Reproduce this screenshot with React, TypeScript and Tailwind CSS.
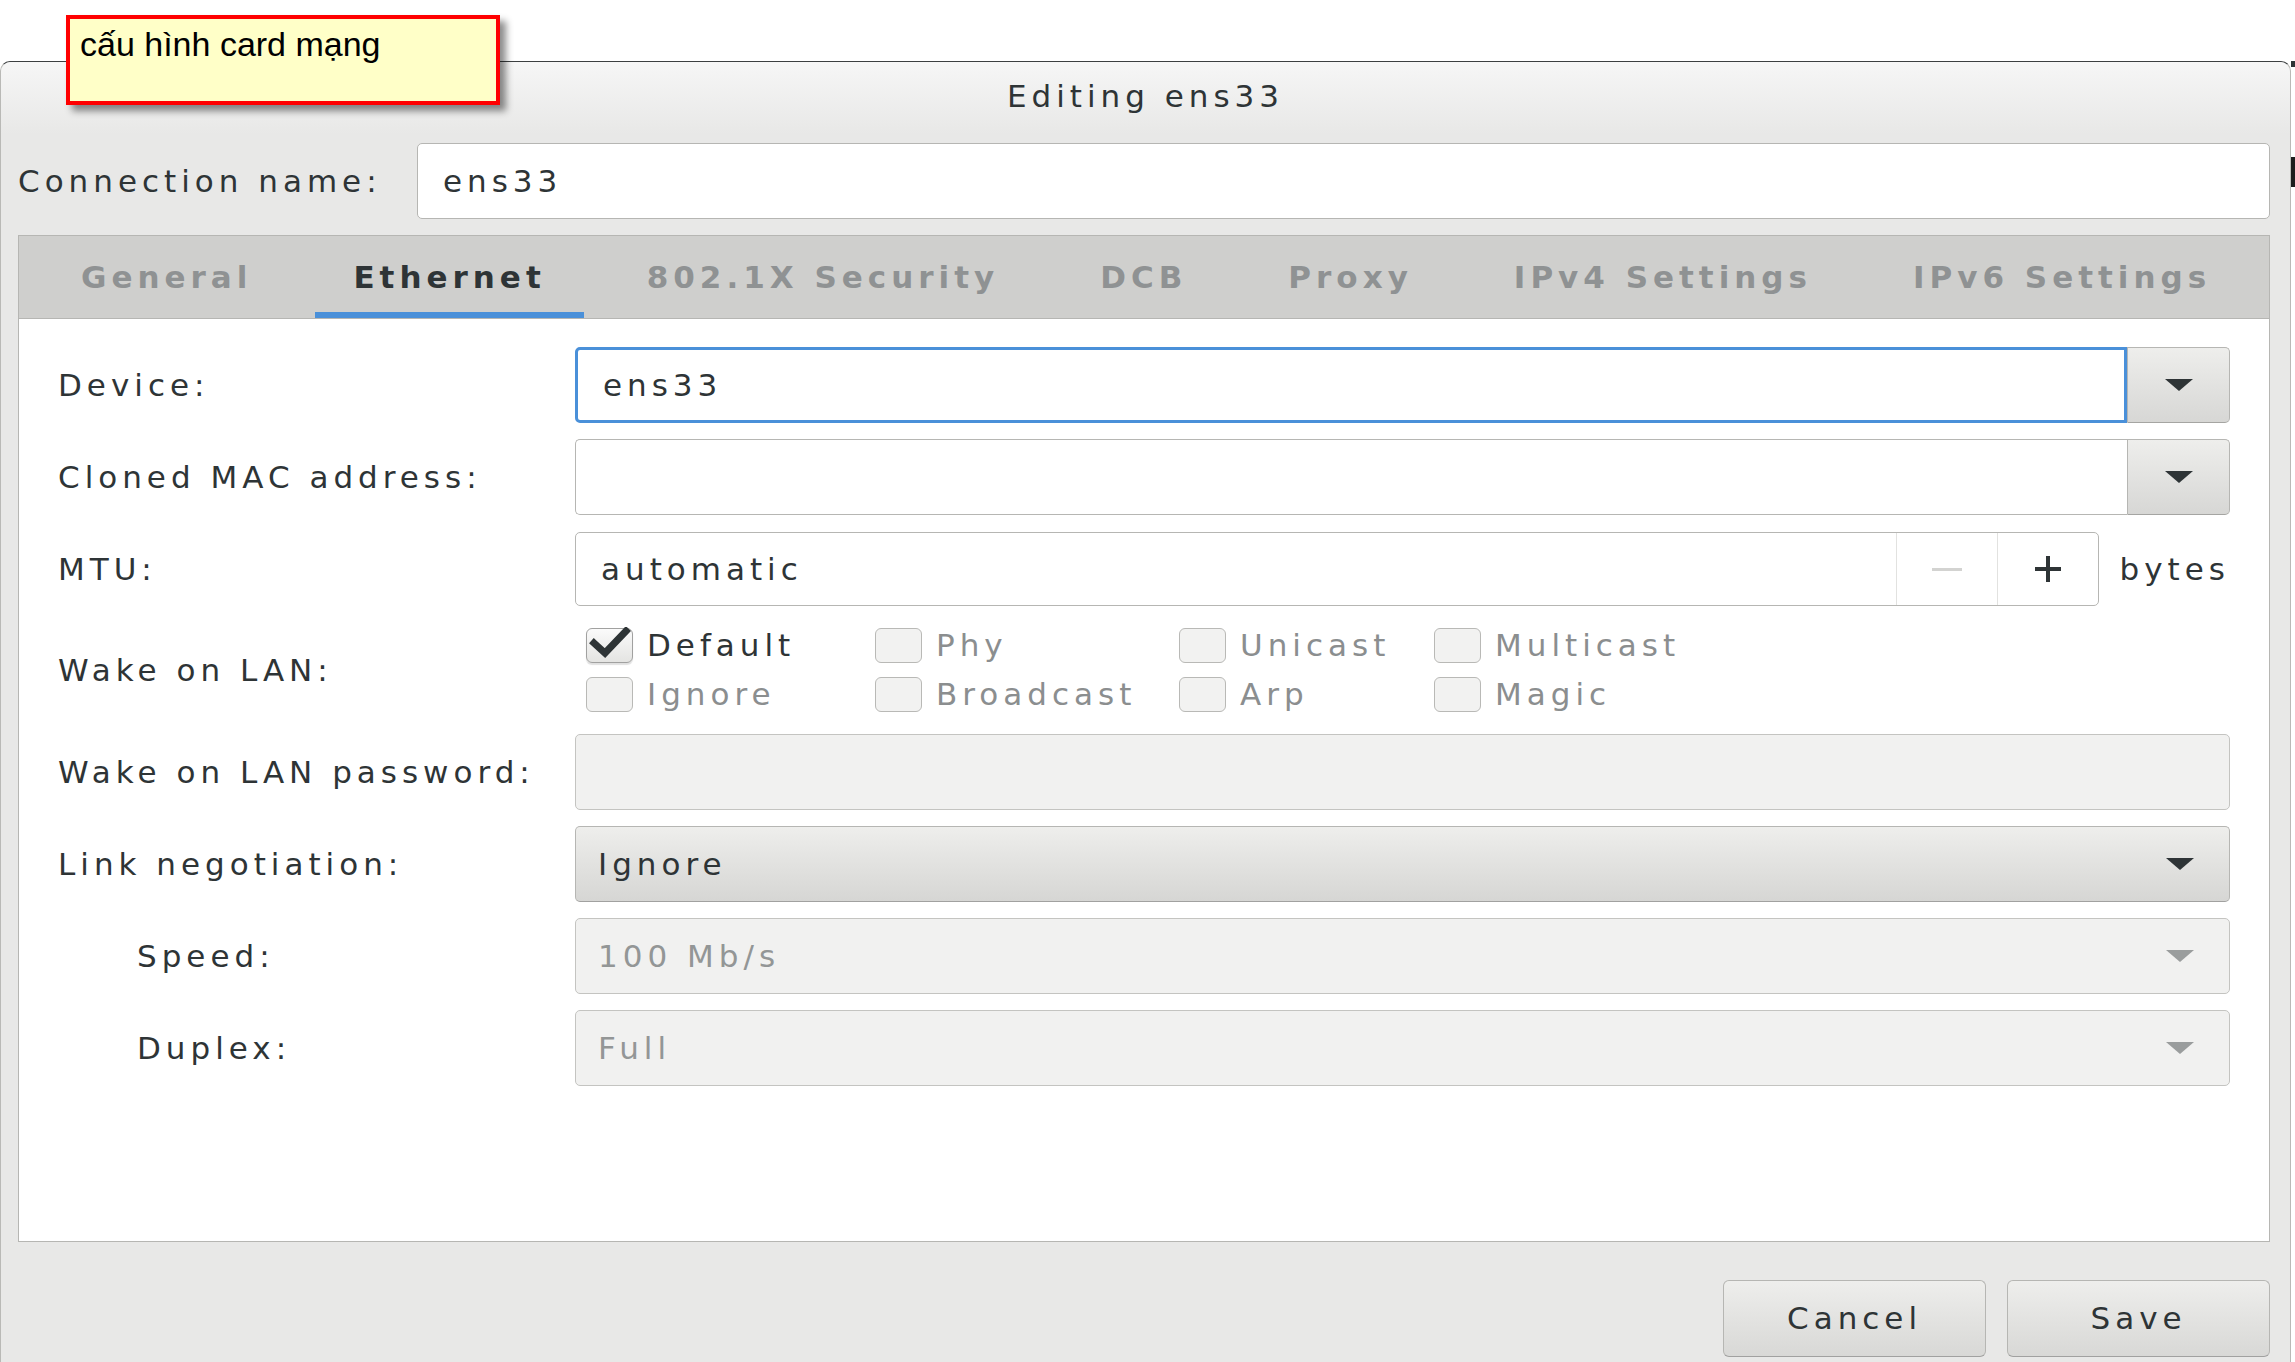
import type { ReactNode } from 'react';

const txt = "text-[31px] tracking-[5px] leading-none";
const dark = "text-[#2e3436]";
const dim = "text-[#8b8e8f]";

function Arrow({ color = '#2e3436' }: { color?: string }) {
  return (
    <svg width="28" height="12" viewBox="0 0 28 12">
      <polygon points="0,0 28,0 14,12" fill={color} />
    </svg>
  );
}

function Label({ children, indent }: { children: ReactNode; indent?: boolean }) {
  return (
    <div className={`flex items-center ${txt} ${dark} ${indent ? 'pl-[79px]' : ''}`}>{children}</div>
  );
}

function ComboEntry({ value, focused }: { value?: string; focused?: boolean }) {
  return (
    <div className="flex h-[76px]">
      <div
        className={`flex-1 flex items-center pl-[25px] bg-white rounded-l-[5px] ${
          focused ? 'border-[3px] border-[#4a90d9]' : 'border border-r-0 border-[#b6b6b3]'
        } ${txt} ${dark}`}
      >
        {value}
      </div>
      <div className="w-[103px] flex items-center justify-center rounded-r-[5px] border border-[#b6b6b3] border-b-[#a5a5a2] bg-gradient-to-b from-[#eeeeec] to-[#d7d7d5]">
        <Arrow />
      </div>
    </div>
  );
}

function Combo({ value, disabled }: { value: string; disabled?: boolean }) {
  return (
    <div
      className={`h-[76px] flex items-center justify-between pl-[22px] pr-[35px] rounded-[5px] border ${
        disabled
          ? 'bg-[#f1f1f0] border-[#c4c4c1]'
          : 'bg-gradient-to-b from-[#eeeeec] to-[#d6d6d4] border-[#b6b6b3] border-b-[#a1a1a0]'
      }`}
    >
      <span className={`${txt} ${disabled ? 'text-[#939696]' : dark}`}>{value}</span>
      <Arrow color={disabled ? '#9a9d9d' : '#2e3436'} />
    </div>
  );
}

function Check({ label, checked }: { label: string; checked?: boolean }) {
  return (
    <div className="flex items-center gap-[14px]">
      <div
        className={`w-[47px] h-[35px] rounded-[6px] border flex items-center justify-center ${
          checked
            ? 'border-[#a1a1a0] bg-gradient-to-b from-[#fbfbfb] to-[#e4e4e2] shadow-[0_2px_1px_rgba(0,0,0,0.12)]'
            : 'border-[#b9b9b6] bg-[#f2f2f1]'
        }`}
      >
        {checked && (
          <svg width="42" height="32" viewBox="0 0 42 32" className="-mt-[5px]">
            <path d="M5 16 L16 26 L37 4" fill="none" stroke="#2e3436" strokeWidth="7" strokeLinecap="square" />
          </svg>
        )}
      </div>
      <span className={`${txt} ${checked ? dark : dim}`}>{label}</span>
    </div>
  );
}

const tabs = ['General', 'Ethernet', '802.1X Security', 'DCB', 'Proxy', 'IPv4 Settings', 'IPv6 Settings'];

export default function App() {
  return (
    <div className="relative w-[2295px] h-[1362px] overflow-hidden bg-white font-['DejaVu_Sans',sans-serif]">
      <div className="flex pt-[61px] h-full">
        <div className="w-[2291px] h-full flex flex-col bg-[#e8e8e7] rounded-t-[10px] border-t border-x border-t-[#3c3f40] border-x-[#b9b9b6]">
          {/* header bar */}
          <div className="h-[72px] shrink-0 flex items-center justify-center rounded-t-[10px] bg-gradient-to-b from-[#f6f6f6] to-[#e8e8e7]">
            <span className={`${txt} ${dark} -mt-[3px]`}>Editing ens33</span>
          </div>

          {/* connection name */}
          <div className="flex items-center mt-[9px] pl-[17px] pr-[20px]">
            <span className={`w-[399px] ${txt} ${dark}`}>Connection name:</span>
            <div className={`flex-1 h-[76px] flex items-center pl-[25px] bg-white rounded-[5px] border border-[#b6b6b3] ${txt} ${dark}`}>
              ens33
            </div>
          </div>

          {/* notebook */}
          <div className="mt-[16px] ml-[17px] mr-[20px] border border-[#b6b6b3] flex flex-col">
            <div className="h-[83px] flex items-stretch pl-[24px] gap-[25px] bg-[#cfcfcd] border-b border-[#b6b6b3]">
              {tabs.map((t) => (
                <div
                  key={t}
                  className={`px-[38px] flex items-center font-bold ${txt} ${
                    t === 'Ethernet' ? 'text-[#2e3436] border-b-[6px] border-[#4a90d9] pt-[6px]' : 'text-[#8f9293]'
                  }`}
                >
                  {t}
                </div>
              ))}
            </div>

            <div className="h-[922px] bg-white px-[39px] pt-[28px] grid grid-cols-[517px_1fr] auto-rows-min gap-y-[16px]">
              <Label>Device:</Label>
              <ComboEntry value="ens33" focused />

              <Label>Cloned MAC address:</Label>
              <ComboEntry />

              <Label>MTU:</Label>
              <div className="flex items-center h-[76px]">
                <div className="flex-1 h-[74px] flex rounded-[5px] border border-[#b6b6b3] bg-white">
                  <div className={`flex-1 flex items-center pl-[25px] ${txt} ${dark}`}>automatic</div>
                  <div className="w-[101px] border-l border-[#e2e2e0] flex items-center justify-center">
                    <div className="w-[30px] h-[3px] bg-[#d3d3d1]" />
                  </div>
                  <div className="w-[101px] border-l border-[#e2e2e0] flex items-center justify-center">
                    <svg width="30" height="30" viewBox="0 0 30 30">
                      <path d="M15 2 V28 M2 15 H28" stroke="#2e3436" strokeWidth="4" />
                    </svg>
                  </div>
                </div>
                <span className={`ml-[21px] ${txt} ${dark}`}>bytes</span>
              </div>

              <Label>Wake on LAN:</Label>
              <div className="h-[95px] pt-[5px] pl-[11px] grid grid-cols-[289px_304px_255px_auto] gap-y-[14px] content-start">
                <Check label="Default" checked />
                <Check label="Phy" />
                <Check label="Unicast" />
                <Check label="Multicast" />
                <Check label="Ignore" />
                <Check label="Broadcast" />
                <Check label="Arp" />
                <Check label="Magic" />
              </div>

              <Label>Wake on LAN password:</Label>
              <div className="h-[76px] rounded-[5px] border border-[#c4c4c1] bg-[#f1f1f0]" />

              <Label>Link negotiation:</Label>
              <Combo value="Ignore" />

              <Label indent>Speed:</Label>
              <Combo value="100 Mb/s" disabled />

              <Label indent>Duplex:</Label>
              <Combo value="Full" disabled />
            </div>
          </div>

          {/* action buttons */}
          <div className="flex justify-end gap-[21px] mt-[38px] mr-[20px]">
            {['Cancel', 'Save'].map((b) => (
              <div
                key={b}
                className={`w-[263px] h-[77px] flex items-center justify-center rounded-[6px] border border-[#b6b6b3] border-b-[#a1a1a0] bg-gradient-to-b from-[#eeeeec] to-[#d8d8d6] ${txt} ${dark}`}
              >
                {b}
              </div>
            ))}
          </div>
        </div>
        <div className="w-[4px] flex flex-col">
          <div className="h-[6px] bg-[#2e3436]" />
          <div className="h-[90px]" />
          <div className="h-[30px] bg-[#1c1c1c]" />
        </div>
      </div>

      {/* annotation */}
      <div className="absolute left-[66px] top-[15px] w-[434px] h-[90px] border-[4px] border-[#ff0000] bg-[#ffffc8] shadow-[6px_6px_7px_rgba(0,0,0,0.45)] pl-[10px] pt-[8px]">
        <span className="font-['Liberation_Sans',Arial,sans-serif] text-[34px] leading-none text-black">cấu hình card mạng</span>
      </div>
    </div>
  );
}
